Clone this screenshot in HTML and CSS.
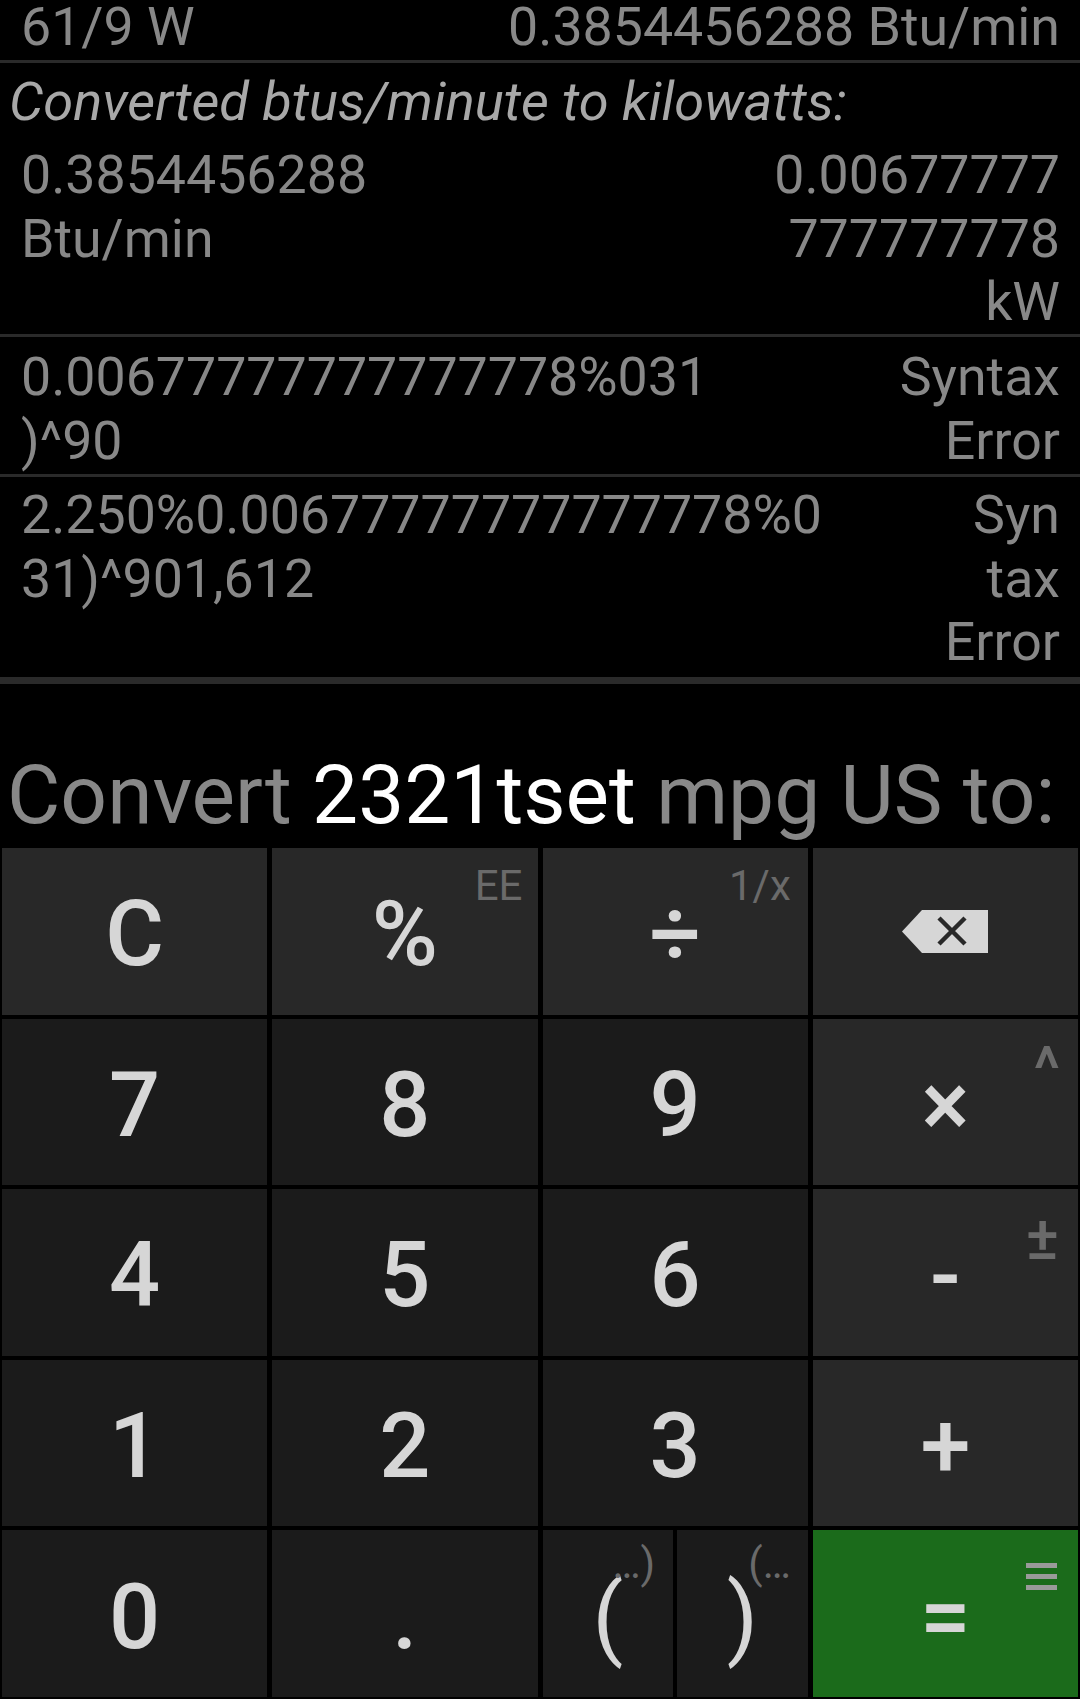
FILE: index.html
```html
<!DOCTYPE html>
<html>
<head>
<meta charset="utf-8">
<link rel="stylesheet" href="styles.css">
</head>
<body>
<div class="app">
  <div class="history">
    <div class="row top">
      <div class="l">61/9 W</div>
      <div class="r">0.3854456288 Btu/min</div>
    </div>
    <div class="row section">
      <div class="head">Converted btus/minute to kilowatts:</div>
      <div class="pair">
        <div class="l">0.3854456288<br>Btu/min</div>
        <div class="r">0.00677777<br>777777778<br>kW</div>
      </div>
    </div>
    <div class="row r2">
      <div class="l">0.00677777<!---->777777778%031<br>)^90</div>
      <div class="r">Syntax<br>Error</div>
    </div>
    <div class="row r3">
      <div class="l">2.250%0.00677777<!---->777777778%0<br>31)^901,612</div>
      <div class="r">Syn<br>tax<br>Error</div>
    </div>
  </div>
  <div class="prompt"><span class="dim">Convert </span><span class="val">2321tset</span><span class="dim"> mpg US to:</span></div>
  <div class="keypad">
    <div class="key fn"><span class="lbl">C</span></div>
    <div class="key fn"><span class="lbl">%</span><span class="sub sub-ee">EE</span></div>
    <div class="key fn"><span class="lbl">÷</span><span class="sub sub-inv">1/x</span></div>
    <div class="key fn">
      <svg class="bksp" width="86" height="43" viewBox="0 0 86 43">
        <path d="M0 21.5 L20 0 H86 V43 H20 Z" fill="#d6d6d6"/>
        <path d="M37 8 L63 34 M63 8 L37 34" stroke="#282828" stroke-width="4.5"/>
      </svg>
    </div>

    <div class="key"><span class="lbl">7</span></div>
    <div class="key"><span class="lbl">8</span></div>
    <div class="key"><span class="lbl">9</span></div>
    <div class="key fn"><span class="lbl">×</span><span class="sub sub-pow">^</span></div>

    <div class="key"><span class="lbl">4</span></div>
    <div class="key"><span class="lbl">5</span></div>
    <div class="key"><span class="lbl">6</span></div>
    <div class="key fn"><span class="lbl">-</span><span class="sub sub-pm">±</span></div>

    <div class="key"><span class="lbl">1</span></div>
    <div class="key"><span class="lbl">2</span></div>
    <div class="key"><span class="lbl">3</span></div>
    <div class="key fn"><span class="lbl">+</span></div>

    <div class="key"><span class="lbl">0</span></div>
    <div class="key"><span class="lbl">.</span></div>
    <div class="split">
      <div class="key"><span class="lbl paren">(</span><span class="sub sub-open">…)</span></div>
      <div class="key"><span class="lbl paren">)</span><span class="sub sub-close">(…</span></div>
    </div>
    <div class="key eq"><span class="lbl">=</span>
      <svg class="menu" width="31" height="27" viewBox="0 0 31 27">
        <rect x="0" y="0" width="31" height="5" fill="#9a9a9a"/>
        <rect x="0" y="11" width="31" height="5" fill="#9a9a9a"/>
        <rect x="0" y="22" width="31" height="5" fill="#9a9a9a"/>
      </svg>
    </div>
  </div>
</div>
</body>
</html>
```

FILE: styles.css
```css
html, body {
  margin: 0;
  padding: 0;
  background: #000;
}
body {
  font-family: Roboto, "Noto Sans", sans-serif;
  width: 1080px;
  height: 1699px;
  overflow: hidden;
}
.app {
  display: flex;
  flex-direction: column;
  height: 1699px;
}

/* history list */
.history {
  height: 684px;
  box-sizing: border-box;
  border-bottom: 7px solid #2a2a2a;
  display: flex;
  flex-direction: column;
  justify-content: flex-end;
  overflow: hidden;
  font-size: 53.7px;
  line-height: 63.5px;
  color: #888;
}
.row {
  display: flex;
  justify-content: space-between;
  padding: 7px 20px 3px 21px;
  border-top: 3px solid #2a2a2a;
  flex-shrink: 0;
}
.row .r { text-align: right; }
.row.top { padding-bottom: 1.5px; }
.row.section {
  display: block;
  padding: 7px 20px 0.5px 9px;
}
.head {
  font-style: italic;
  font-size: 54.2px;
  color: #a8a8a8;
  margin-bottom: 9.5px;
}
.pair {
  display: flex;
  justify-content: space-between;
  padding-left: 12px;
}
.row.r2 { padding-top: 8px; padding-bottom: 2px; }
.row.r3 { padding-top: 6px; padding-bottom: 3.5px; }

/* prompt */
.prompt {
  height: 164px;
  box-sizing: border-box;
  display: flex;
  align-items: flex-end;
  padding: 0 0 5px 7px;
  font-size: 82px;
  line-height: 96px;
  white-space: nowrap;
}
.prompt .dim { color: #888; white-space: pre; }
.prompt .val { color: #fff; }

/* keypad */
.keypad {
  flex: 1;
  display: grid;
  grid-template-columns: repeat(4, 1fr);
  grid-template-rows: repeat(5, 1fr);
  gap: 4px 5px;
  padding: 0 2px 2px 2px;
}
.split {
  display: grid;
  grid-template-columns: 1fr 1fr;
  gap: 4px;
}
.key {
  position: relative;
  background: #1b1b1b;
  display: flex;
  align-items: center;
  justify-content: center;
  color: #d6d6d6;
  font-size: 90px;
  font-weight: 500;
  overflow: hidden;
}
.key.fn { background: #282828; }
.key.eq { background: #1b6b1b; }
.lbl {
  line-height: 106px;
  margin-top: 8px;
}
.lbl.paren { font-weight: 400; }
.bksp { display: block; }

.sub {
  position: absolute;
  color: #6a6a6a;
  font-size: 42px;
  font-weight: 400;
  line-height: 49px;
}
.sub-ee { top: 13px; right: 15px; }
.sub-inv { top: 13px; right: 17px; }
.sub-pow { top: 14px; right: 18px; font-size: 62px; line-height: 72px; font-weight: 500; }
.sub-pm { top: 13px; right: 19px; font-size: 62px; line-height: 72px; font-weight: 500; }
.sub-open { top: 9px; right: 18px; }
.sub-close { top: 9px; right: 17px; }
.menu {
  position: absolute;
  top: 33px;
  right: 21px;
}
```
